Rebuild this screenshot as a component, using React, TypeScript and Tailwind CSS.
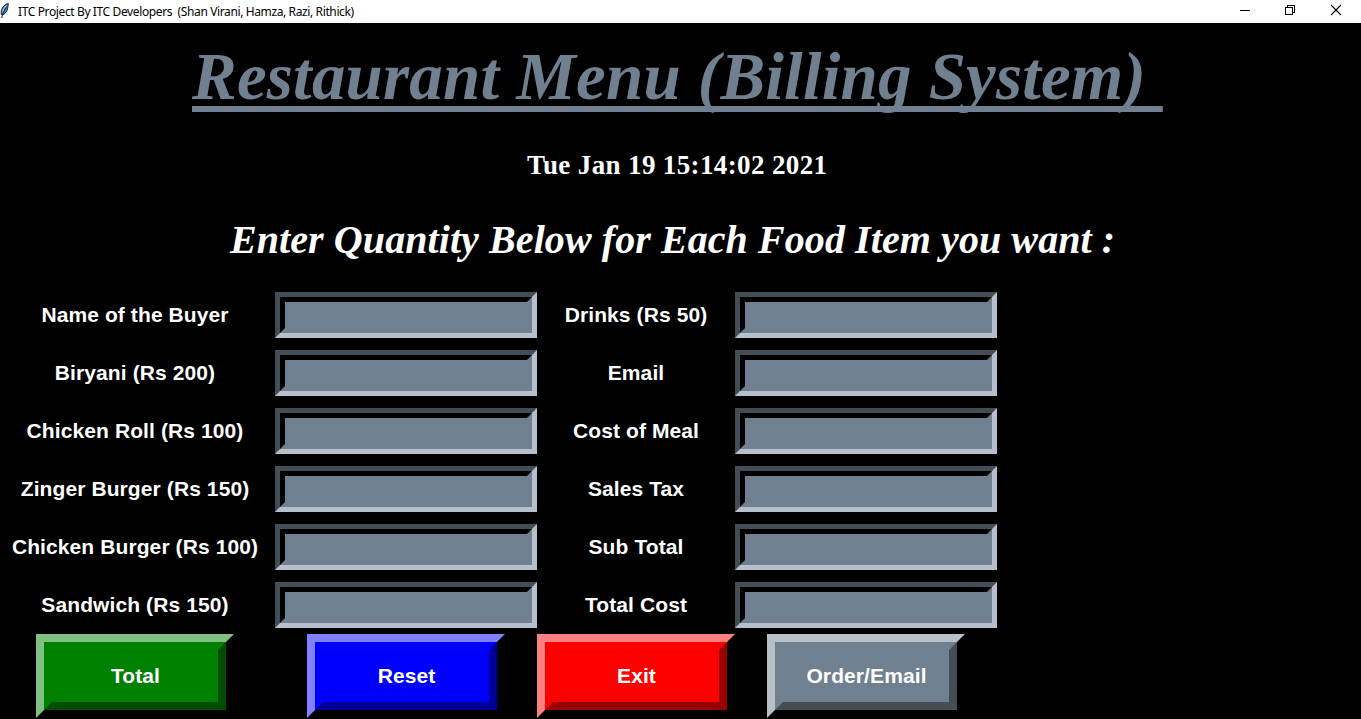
import React from "react";

const rows: [string, string][] = [
  ["Name of the Buyer", "Drinks (Rs 50)"],
  ["Biryani (Rs 200)", "Email"],
  ["Chicken Roll (Rs 100)", "Cost of Meal"],
  ["Zinger Burger (Rs 150)", "Sales Tax"],
  ["Chicken Burger (Rs 100)", "Sub Total"],
  ["Sandwich (Rs 150)", "Total Cost"],
];

const buttons = [
  { label: "Total", outer: "border-t-[#80c080] border-l-[#80c080]", inner: "bg-[#008000] border-t-[#008000] border-l-[#008000] border-b-[#004d00] border-r-[#004d00]" },
  { label: "Reset", outer: "border-t-[#8080ff] border-l-[#8080ff]", inner: "bg-[#0000ff] border-t-[#0000ff] border-l-[#0000ff] border-b-[#000099] border-r-[#000099]" },
  { label: "Exit", outer: "border-t-[#ff8080] border-l-[#ff8080]", inner: "bg-[#ff0000] border-t-[#ff0000] border-l-[#ff0000] border-b-[#990000] border-r-[#990000]" },
  { label: "Order/Email", outer: "border-t-[#b7bfc8] border-l-[#b7bfc8]", inner: "bg-[#708090] border-t-[#708090] border-l-[#708090] border-b-[#434d56] border-r-[#434d56]" },
];

function TitleBar() {
  return (
    <header className="flex h-[23px] shrink-0 items-center bg-white text-black">
      <svg width="12" height="23" viewBox="0 0 12 23" className="mr-[6px]">
        <path d="M8.300 3.500C5.500 3.700 2.200 7 1.300 10.800L1.200 14.500 2.700 15C5.500 13.500 7.300 11 7.700 8.200Z" fill="#4f86c6" stroke="#16202b" strokeWidth="1" />
        <path d="M6.500 5.500C4.500 7.200 3.200 9.500 2.600 12" fill="none" stroke="#a9cdf2" strokeWidth="1" />
        <path d="M6.300 7.500C4.200 10.500 2.600 13.500 1.700 18" fill="none" stroke="#111820" strokeWidth="1" />
      </svg>
      <div className="whitespace-pre font-['Noto_Sans',sans-serif] text-[12px] leading-[23px] tracking-[-0.38px]">
        {"ITC Project By ITC Developers  (Shan Virani, Hamza, Razi, Rithick)"}
      </div>
      <div className="ml-auto flex h-full">
        <svg width="46" height="23" viewBox="0 0 46 23" shapeRendering="crispEdges">
          <path d="M18 10.500h10" stroke="#000" />
        </svg>
        <svg width="46" height="23" viewBox="0 0 46 23" fill="none" stroke="#000" shapeRendering="crispEdges">
          <path d="M17.500 7.500h7v7h-7zM19.500 7.500v-2h7v7h-2" />
        </svg>
        <svg width="47" height="23" viewBox="0 0 47 23" stroke="#000" strokeWidth="1.200">
          <path d="M17 5l10 10M27 5l-10 10" />
        </svg>
      </div>
    </header>
  );
}

function Entry() {
  return (
    <div className="h-[46px] w-[262px] justify-self-center border-[5px] border-t-[#434d56] border-r-[#b7bfcc] border-b-[#b7bfcc] border-l-[#434d56]">
      <input
        type="text"
        className="block h-full w-full border-[5px] border-t-black border-r-[#708090] border-b-[#708090] border-l-black bg-[#708090] text-white outline-none"
      />
    </div>
  );
}

function Label({ text }: { text: string }) {
  return <label className="justify-self-center whitespace-nowrap">{text}</label>;
}

export default function App() {
  return (
    <div className="flex h-[719px] w-[1361px] flex-col overflow-hidden bg-black font-['Liberation_Sans',Arial,sans-serif] text-white">
      <TitleBar />
      <div className="flex h-[263px] shrink-0 flex-col whitespace-pre font-['Liberation_Serif','Times_New_Roman',serif] font-bold">
        <h1 className="mt-[15px] pl-[192px] text-[67px] leading-[76px] tracking-[0.2px] text-[#708090] italic">
          <span className="underline decoration-[6px] underline-offset-[7px] [text-decoration-skip-ink:none]">{"Restaurant Menu (Billing System)\u00a0"}</span>
        </h1>
        <p className="mt-[35px] pl-[527px] text-[27px] leading-[32px] tracking-[0.37px]">Tue Jan 19 15:14:02 2021</p>
        <p className="mt-[36px] pl-[230px] text-[40px] leading-[46px] tracking-[0.08px] italic">Enter Quantity Below for Each Food Item you want :</p>
      </div>
      <main className="grid w-[1002px] grid-cols-[270px_272px_188px_272px] grid-rows-[repeat(6,58px)_84px] items-center text-[21px] leading-[24px] font-bold tracking-[0.1px]">
        {rows.map(([left, right]) => (
          <React.Fragment key={left}>
            <Label text={left} />
            <Entry />
            <Label text={right} />
            <Entry />
          </React.Fragment>
        ))}
        {buttons.map((b) => (
          <button key={b.label} type="button" className={`h-[84px] w-[198px] justify-self-center border-8 border-r-black border-b-black ${b.outer}`}>
            <span className={`flex h-full w-full items-center justify-center border-8 pl-px whitespace-nowrap ${b.inner}`}>{b.label}</span>
          </button>
        ))}
      </main>
    </div>
  );
}
